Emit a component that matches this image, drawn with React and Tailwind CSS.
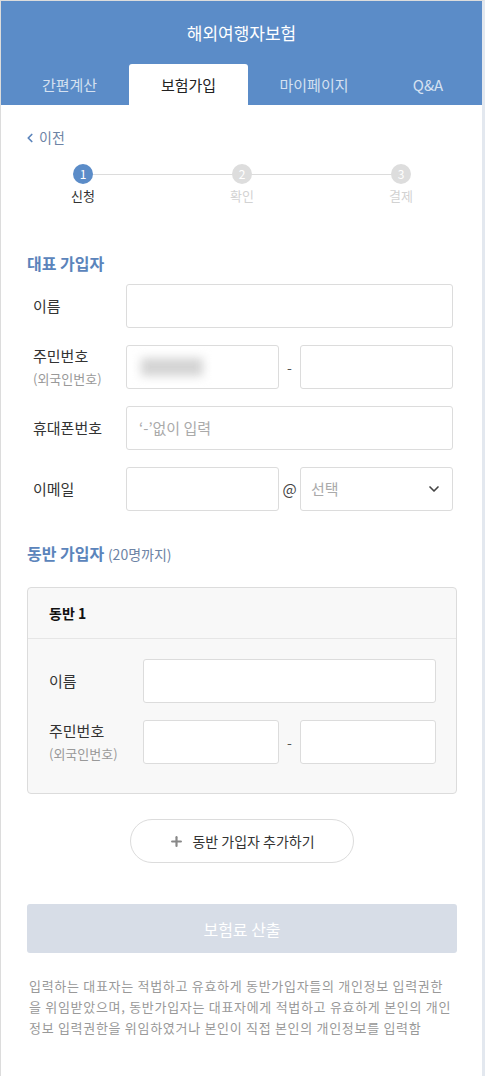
import { ChevronLeft, ChevronDown, Plus } from "lucide-react";

const font = { fontFamily: '"Noto Sans CJK KR", "Noto Sans", sans-serif' };

const tabs = [
  { t: "간편계산", w: "w-[119px]" },
  { t: "보험가입", w: "w-[119px]" },
  { t: "마이페이지", w: "w-[132px]" },
  { t: "Q&A", w: "flex-1" },
];
const steps = ["신청", "확인", "결제"];

function Field({ className = "", children }) {
  return (
    <div
      className={`h-[44px] rounded-[3px] border border-[#dcdcdc] bg-white px-3 flex items-center text-[15px] ${className}`}
    >
      {children}
    </div>
  );
}

function Label({ main, sub }) {
  return (
    <div className="flex flex-col justify-center">
      <span className="text-[15px] text-[#333] leading-[22px]">{main}</span>
      {sub && (
        <span className="text-[13px] text-[#999] leading-[20px] mt-[2px]">{sub}</span>
      )}
    </div>
  );
}

export default function App() {
  return (
    <div
      style={font}
      className="min-h-[1076px] bg-white border-t border-l border-[#dcdcdc] border-r-[3px] border-r-[#e3e8ef] border-b-[3px] border-b-[#e3e8ef]"
    >
      <header className="bg-[#5b8cc8] h-[104px] flex flex-col">
        <h1 className="h-[63px] flex items-center justify-center text-white text-[17px] pt-[1px]">
          해외여행자보험
        </h1>
        <nav className="flex pl-[9px] pr-[6px] h-[41px]">
          {tabs.map(({ t, w }, i) => (
            <div
              key={t}
              className={`${w} flex items-center justify-center text-[15px] pt-[2px] ${
                i === 1
                  ? "bg-white text-[#222] rounded-t-[3px]"
                  : "text-[#d5e1f1]"
              }`}
            >
              {t}
            </div>
          ))}
        </nav>
      </header>

      <main className="pl-[26px] pr-[25px]">
        <div className="flex items-center gap-[2px] mt-[22px] text-[14px] text-[#6d83a5]">
          <ChevronLeft size={14} strokeWidth={3} className="text-[#5b84bb] -ml-[4px]" />
          <span>이전</span>
        </div>

        <div className="relative mt-[16px] h-[50px]">
          <div className="absolute left-[56px] right-[54px] top-[10px] h-px bg-[#dcdcdc]" />
          <div className="flex justify-between px-[45px]">
            {steps.map((s, i) => (
              <div key={s} className="relative flex flex-col items-center w-[22px]">
                <div
                  className={`w-[20px] h-[20px] rounded-full flex items-center justify-center text-white text-[12px] ${
                    i === 0 ? "bg-[#5b8cc8]" : "bg-[#dddddd]"
                  }`}
                >
                  {i + 1}
                </div>
                <span
                  className={`mt-[2px] text-[13px] whitespace-nowrap ${
                    i === 0 ? "text-[#333]" : "text-[#d2d2d2]"
                  }`}
                >
                  {s}
                </span>
              </div>
            ))}
          </div>
        </div>

        <h2 className="mt-[37px] text-[16px] font-bold text-[#5b84bb]">대표 가입자</h2>

        <div className="mt-[9px] pr-[4px] flex flex-col gap-[17px]">
          <div className="flex">
            <div className="w-[99px] pl-[6px] flex items-center">
              <Label main="이름" />
            </div>
            <Field className="flex-1" />
          </div>
          <div className="flex">
            <div className="w-[99px] pl-[6px] flex items-center">
              <Label main="주민번호" sub="(외국인번호)" />
            </div>
            <div className="flex-1 flex items-center">
              <Field className="w-[153px] bg-[#f5f5f5] relative overflow-hidden">
                <div className="w-[62px] h-[18px] bg-[#d4d4d4] blur-[5px] ml-[2px]" />
              </Field>
              <span className="w-[21px] text-center text-[#555] text-[14px]">-</span>
              <Field className="flex-1" />
            </div>
          </div>
          <div className="flex">
            <div className="w-[99px] pl-[6px] flex items-center">
              <Label main="휴대폰번호" />
            </div>
            <Field className="flex-1 text-[#aaa]">‘-’없이 입력</Field>
          </div>
          <div className="flex">
            <div className="w-[99px] pl-[6px] flex items-center">
              <Label main="이메일" />
            </div>
            <div className="flex-1 flex items-center">
              <Field className="w-[153px]" />
              <span className="w-[21px] text-center text-[#444] text-[15px]">@</span>
              <Field className="flex-1 justify-between text-[#aaa] pl-[10px] pr-[10px]">
                <span>선택</span>
                <ChevronDown size={16} strokeWidth={2.5} className="text-[#444]" />
              </Field>
            </div>
          </div>
        </div>

        <h2 className="mt-[30px] text-[16px] font-bold text-[#5b84bb]">
          동반 가입자{" "}
          <span className="text-[14px] font-normal text-[#6d83a5]">(20명까지)</span>
        </h2>

        <section className="mt-[22px] rounded-[4px] border border-[#dcdcdc] bg-[#f8f8f8]">
          <div className="h-[51px] flex items-center px-[21px] border-b border-[#e6e6e6] text-[14px] font-bold text-[#111]">
            동반 1
          </div>
          <div className="pl-[21px] pr-[20px] pt-[20px] pb-[29px] flex flex-col gap-[17px]">
            <div className="flex">
              <div className="w-[94px] flex items-center">
                <Label main="이름" />
              </div>
              <Field className="flex-1" />
            </div>
            <div className="flex">
              <div className="w-[94px] flex items-center">
                <Label main="주민번호" sub="(외국인번호)" />
              </div>
              <div className="flex-1 flex items-center">
                <Field className="w-[136px]" />
                <span className="w-[21px] text-center text-[#555] text-[14px]">-</span>
                <Field className="flex-1" />
              </div>
            </div>
          </div>
        </section>

        <div className="mt-[25px] flex justify-center">
          <button className="w-[224px] h-[44px] rounded-full border border-[#dcdcdc] bg-white flex items-center justify-center gap-[8px] text-[14px] text-[#333]">
            <Plus size={15} strokeWidth={3.5} className="text-[#888]" />
            동반 가입자 추가하기
          </button>
        </div>

        <button className="mt-[41px] w-full h-[49px] rounded-[3px] bg-[#d7dde7] text-white text-[16px]">
          보험료 산출
        </button>

        <p className="mt-[22px] mb-[40px] pl-[2px] text-[13px] tracking-[0.7px] leading-[21px] text-[#999]">
          <span className="block whitespace-nowrap">
            입력하는 대표자는 적법하고 유효하게 동반가입자들의 개인정보 입력권한
          </span>
          <span className="block whitespace-nowrap">
            을 위임받았으며, 동반가입자는 대표자에게 적법하고 유효하게 본인의 개인
          </span>
          <span className="block whitespace-nowrap">
            정보 입력권한을 위임하였거나 본인이 직접 본인의 개인정보를 입력함
          </span>
        </p>
      </main>
    </div>
  );
}
